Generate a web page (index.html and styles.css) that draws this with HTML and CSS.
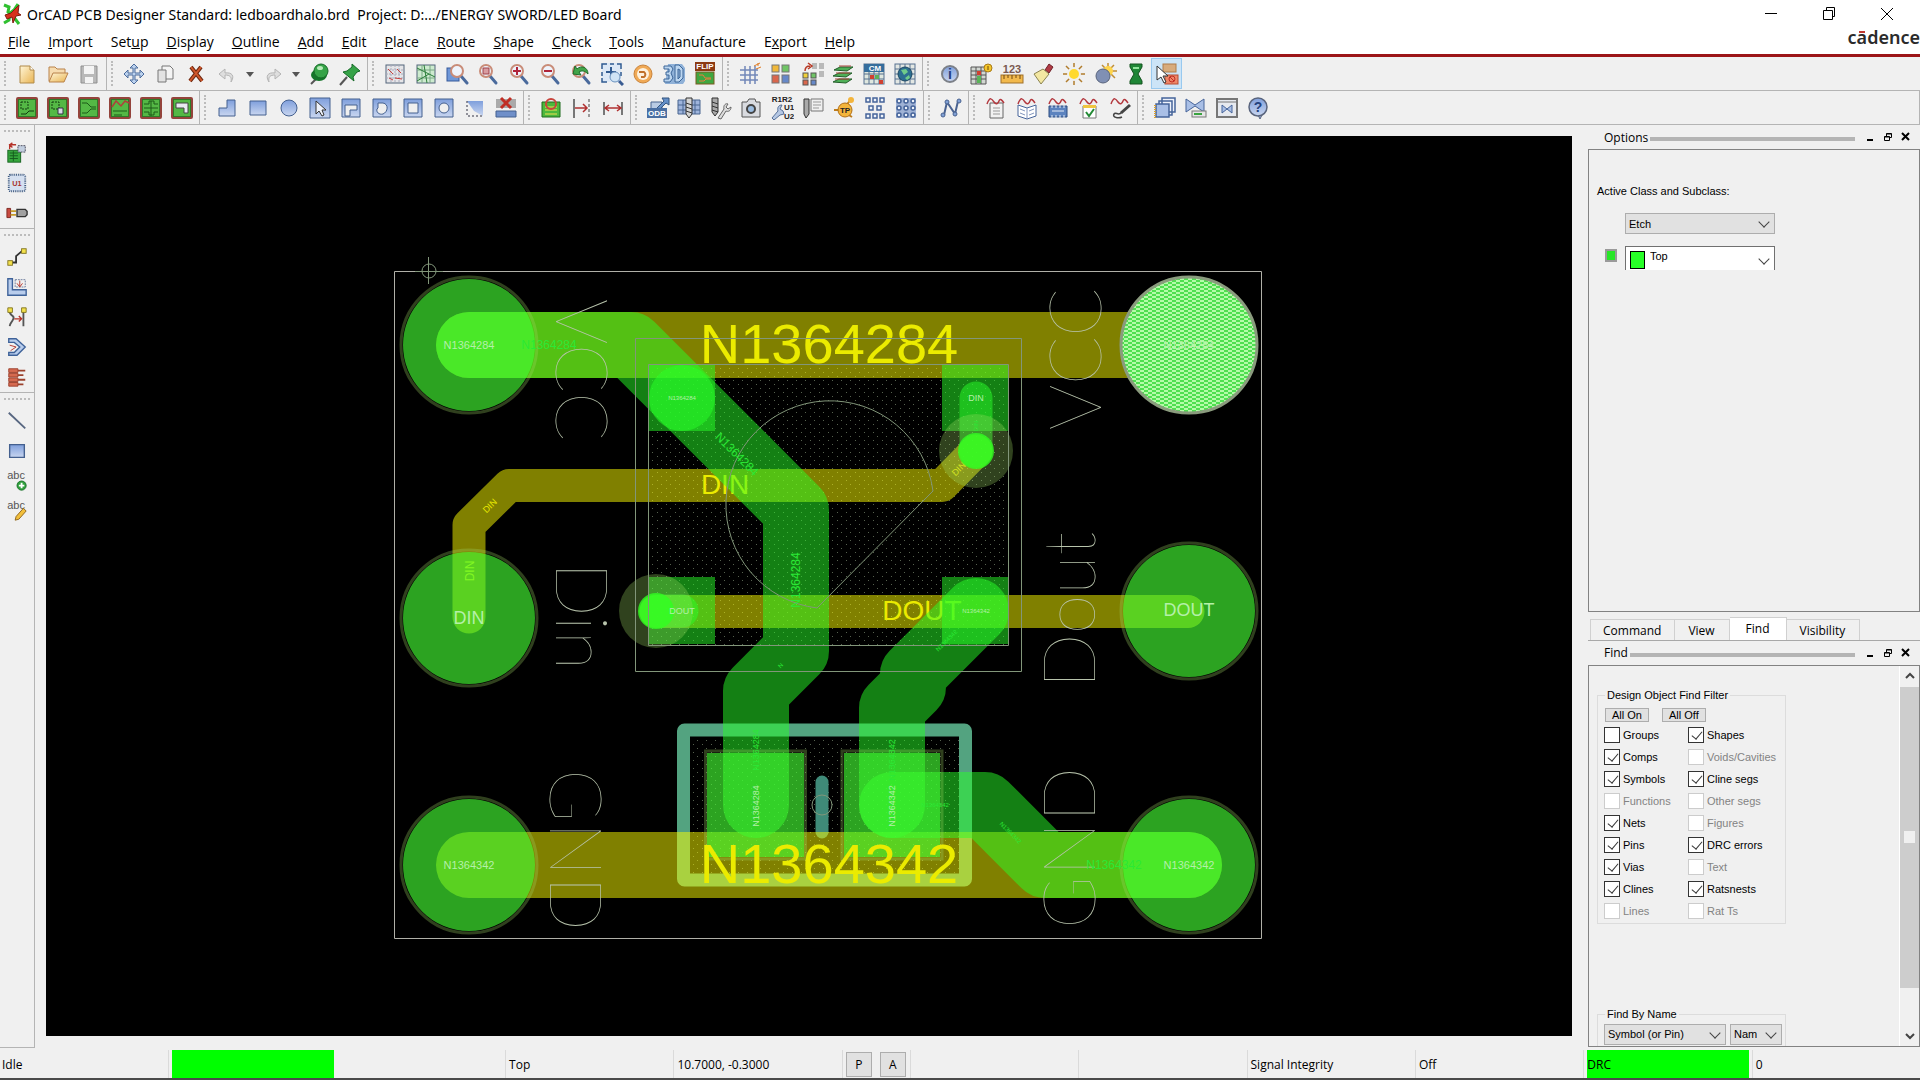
FILE: index.html
```
<!DOCTYPE html>
<html lang="en">
<head>
    <meta charset="UTF-8">
    <meta name="viewport" content="width=device-width, initial-scale=1.0">
    <title>OrCAD PCB Designer Standard: ledboardhalo.brd</title>
    <link rel="stylesheet" href="styles.css">
</head>
<body>
    <!-- shared gradients and symbols -->
    <svg class="defs" width="0" height="0" aria-hidden="true">
        <defs>
            <linearGradient id="blue" x1="0" y1="0" x2="0" y2="1"><stop offset="0" stop-color="#7f9fdc"/><stop offset="1" stop-color="#c9d6f0"/></linearGradient>
            <linearGradient id="gold" x1="0" y1="0" x2="1" y2="1"><stop offset="0" stop-color="#fff6d8"/><stop offset="1" stop-color="#e9b452"/></linearGradient>
            <symbol id="board" viewBox="0 0 24 24"><rect x="2" y="2" width="20" height="20" rx="1" fill="#54b845" stroke="#94443c" stroke-width="2"/><rect x="3.5" y="3.5" width="17" height="17" fill="none" stroke="#2f7a28"/></symbol>
            <symbol id="lens" viewBox="0 0 24 24"><path d="M14 14l6 7" stroke="#4a6a9c" stroke-width="3" stroke-linecap="round"/><circle cx="10" cy="9" r="6" fill="#eef3fb" stroke="#c98c78" stroke-width="2"/></symbol>
            <symbol id="wave" viewBox="0 0 24 24"><path d="M3 8c3-8 5-5 7-2s4 2 5-1 3-1 5 2" fill="none" stroke="#b3383e" stroke-width="1.5"/></symbol>
        </defs>
    </svg>

    <header>
        <div class="title-bar">
            <svg class="app-icon" viewBox="0 0 20 24"><path d="M2 3l5 2-1 5 5 4 6 8M2 21l5-3 1-7 4-3 4-6" fill="none" stroke="#30c030" stroke-width="3"/><path d="M3 13l6-2 8-8-1 8 3 2-5 1-3 7-1-6-5 2z" fill="#d8301c" stroke="#7c1c10"/></svg>
            <h1>OrCAD PCB Designer Standard: ledboardhalo.brd&nbsp; Project: D:.../ENERGY SWORD/LED Board</h1>
            <div class="window-buttons">
                <button aria-label="Minimize"><svg viewBox="0 0 14 14"><path d="M1 6.5h12"/></svg></button>
                <button aria-label="Restore"><svg viewBox="0 0 14 14"><path d="M1.5 3.5h9v9h-9zM4.5 3.5v-3h8v9h-2"/></svg></button>
                <button aria-label="Close"><svg viewBox="0 0 14 14"><path d="M1 1l12 12M13 1L1 13"/></svg></button>
            </div>
        </div>
        <div class="menu-row">
            <nav>
                <a href="#"><u>F</u>ile</a>
                <a href="#"><u>I</u>mport</a>
                <a href="#">Set<u>u</u>p</a>
                <a href="#"><u>D</u>isplay</a>
                <a href="#"><u>O</u>utline</a>
                <a href="#"><u>A</u>dd</a>
                <a href="#"><u>E</u>dit</a>
                <a href="#"><u>P</u>lace</a>
                <a href="#"><u>R</u>oute</a>
                <a href="#"><u>S</u>hape</a>
                <a href="#"><u>C</u>heck</a>
                <a href="#"><u>T</u>ools</a>
                <a href="#"><u>M</u>anufacture</a>
                <a href="#">E<u>x</u>port</a>
                <a href="#"><u>H</u>elp</a>
            </nav>
            <div class="brand">c<span>a</span>dence</div>
        </div>
    </header>

    <div class="toolbar">
        <div class="group">
            <button aria-label="New"><svg viewBox="0 0 24 24"><path d="M5 4h10l4 4v13H5z" fill="url(#gold)" stroke="#b08a4a"/><path d="M15 4v4h4" fill="#fff" stroke="#b08a4a"/></svg></button>
            <button aria-label="Open"><svg viewBox="0 0 24 24"><path d="M3 19V5h6l2 2h8v4" fill="#f6dcb0" stroke="#b9824b"/><path d="M3 20l4-9h15l-4 9z" fill="url(#gold)" stroke="#b9824b"/></svg></button>
            <button aria-label="Save" disabled><svg viewBox="0 0 24 24"><path d="M4 4h16v17H4z" fill="#b9b9b9" stroke="#8f8f8f"/><path d="M7 4h10v8H7zM8 15h8v6H8z" fill="#f4f4f4"/></svg></button>
        </div>
        <div class="group">
            <button aria-label="Move"><svg viewBox="0 0 24 24"><path d="M12 2l4 4h-3v5h5V8l4 4-4 4v-3h-5v5h3l-4 4-4-4h3v-5H6v3l-4-4 4-4v3h5V6H8z" fill="#bcd2ee" stroke="#4c6c9c"/></svg></button>
            <button aria-label="Copy"><svg viewBox="0 0 24 24"><path d="M9 4h8l3 3v10H9z" fill="#f4f4f4" stroke="#777"/><path d="M5 8h8v12H5z" fill="#e2e2e2" stroke="#777"/></svg></button>
            <button aria-label="Delete"><svg viewBox="0 0 24 24"><path d="M7 5l11 14M17 5L6 19" stroke="#6e2810" stroke-width="4"/><path d="M7 5l11 14M17 5L6 19" stroke="#d0562a" stroke-width="2"/></svg></button>
            <button aria-label="Undo" disabled><svg viewBox="0 0 24 24"><path d="M16 20c4-6 1-10-6-9V7l-6 5 6 5v-4c5 0 7 2 6 7z" fill="#dedede" stroke="#b4b4b4"/></svg></button>
            <button class="drop" aria-label="Undo list"><svg viewBox="0 0 12 24"><path d="M2 10h8l-4 5z" fill="#555"/></svg></button>
            <button aria-label="Redo" disabled><svg viewBox="0 0 24 24"><path d="M8 20c-4-6-1-10 6-9V7l6 5-6 5v-4c-5 0-7 2-6 7z" fill="#dedede" stroke="#b4b4b4"/></svg></button>
            <button class="drop" aria-label="Redo list"><svg viewBox="0 0 12 24"><path d="M2 10h8l-4 5z" fill="#555"/></svg></button>
            <button aria-label="Fix"><svg viewBox="0 0 24 24"><path d="M9 17l-5 5" stroke="#555" stroke-width="2"/><ellipse cx="12" cy="13" rx="8" ry="6" fill="#14752a"/><circle cx="14" cy="9" r="7" fill="#35a347" stroke="#176a28"/><ellipse cx="13" cy="6" rx="3" ry="2" fill="#b9eaba"/></svg></button>
            <button aria-label="Unfix"><svg viewBox="0 0 24 24"><path d="M9 15l-7 8" stroke="#555" stroke-width="2"/><path d="M14 2l8 7-3 1-4 5 1 4-11-9 4-1 5-4z" fill="#35a347" stroke="#176a28"/></svg></button>
        </div>
        <div class="group">
            <button aria-label="Rats off"><svg viewBox="0 0 24 24"><rect x="3" y="3" width="18" height="18" fill="#e5e5e8" stroke="#53657b"/><path d="M8 3v18M12 3v18M16 3v18M3 8h18M3 12h18M3 16h18" stroke="#aab" stroke-dasharray="2 1"/><path d="M5 7l5 5M12 16l7 1M14 7l4 4M6 16l4 2" stroke="#c8403c"/></svg></button>
            <button aria-label="Rats on"><svg viewBox="0 0 24 24"><rect x="3" y="3" width="18" height="18" fill="#cdebcf" stroke="#53657b"/><path d="M8 3v18M16 3v18M3 8h18M3 16h18" stroke="#7aa886"/><path d="M3 6l18 9M10 3l3 18M3 19l12-7" stroke="#2b7d39"/></svg></button>
            <button aria-label="Zoom by points"><svg viewBox="0 0 24 24"><rect x="2" y="6" width="12" height="13" fill="#6f97d8" stroke="#365a9b"/><use href="#lens" x="2"/></svg></button>
            <button aria-label="Zoom fit"><svg viewBox="0 0 24 24"><use href="#lens"/><path d="M7 6h6v6H7z" fill="#d89ca0" stroke="#a04048"/></svg></button>
            <button aria-label="Zoom in"><svg viewBox="0 0 24 24"><use href="#lens"/><path d="M10 5v8M6 9h8" stroke="#b0243a" stroke-width="2"/></svg></button>
            <button aria-label="Zoom out"><svg viewBox="0 0 24 24"><use href="#lens"/><path d="M6 9h8" stroke="#b0243a" stroke-width="2"/></svg></button>
            <button aria-label="Zoom previous"><svg viewBox="0 0 24 24"><use href="#lens"/><path d="M19 12c0-7-7-9-11-5L6 4 4 12l8 1-2-3c3-2 6-1 9 2z" fill="#42a54a" stroke="#1f6d2a"/></svg></button>
            <button aria-label="Zoom selection"><svg viewBox="0 0 24 24"><rect x="2" y="1" width="19" height="19" fill="#dce8f6"/><path d="M2 7V2h5M10 2h4M17 2h4v5M2 10v4M21 10v4M2 16v4h5" fill="none" stroke="#315b91" stroke-width="1.5"/><path d="M11 5v10M6 10h10" stroke="#315b91" stroke-width="2"/><circle cx="15" cy="15" r="5" fill="#cfe3f5" stroke="#6a91bd"/><path d="M19 19l4 4" stroke="#3a5c92" stroke-width="3"/></svg></button>
            <button aria-label="Redraw"><svg viewBox="0 0 24 24"><circle cx="12" cy="12" r="9" fill="#f0a955" stroke="#c9843c"/><circle cx="12" cy="12" r="6" fill="#fdf1de"/><path d="M8 10h5a3 3 0 010 5h-3" fill="none" stroke="#c0702a" stroke-width="2"/></svg></button>
            <button aria-label="3D view"><svg viewBox="0 0 24 24"><path d="M3 22h18l2-3V6l-3-4H6z" fill="#8fb1d8"/><path d="M2 4h7l2 3-2 4 2 5-3 4H2v-3h5v-4H4v-3h3V7H2zM13 3h4l4 4v9l-4 4h-4zM16 7v10l2-2V8z" fill="#bcd6f0" stroke="#3c6698"/></svg></button>
            <button aria-label="Flip board"><svg viewBox="0 0 24 24"><rect x="2" y="0" width="20" height="9" fill="#8c3a12"/><text x="12" y="7" class="icon-text light">FLIP</text><rect x="3" y="10" width="18" height="12" fill="#3fa640" stroke="#7c5a20"/><path d="M6 13h4l2 3h6M6 19h5l2-2h5" fill="none" stroke="#ef7a3c"/></svg></button>
        </div>
        <div class="group">
            <button aria-label="Grid"><svg viewBox="0 0 24 24"><path d="M7 4v18M12 4v18M17 4v18M2 8h18M2 13h18M2 18h18" stroke="#7187b8" stroke-width="1.5"/><path d="M16 4l6-3M18 7l5-2M20 1v3" stroke="#e07a20"/></svg></button>
            <button aria-label="Color"><svg viewBox="0 0 24 24"><rect x="3" y="3" width="7" height="7" fill="#f0b83a" stroke="#777"/><rect x="13" y="3" width="7" height="7" fill="#6fc465" stroke="#777"/><rect x="3" y="13" width="7" height="8" fill="#d9664c" stroke="#777"/><rect x="13" y="13" width="7" height="8" fill="#6688c8" stroke="#777"/></svg></button>
            <button aria-label="Color swap"><svg viewBox="0 0 24 24"><path d="M12 1h5v6h-5zM19 1h5v6h-5zM19 9h5v6h-5z" fill="#b9b9b9"/><rect x="3" y="11" width="5" height="5" fill="#f0d03a" stroke="#555"/><rect x="11" y="11" width="5" height="5" fill="#6fc465" stroke="#555"/><rect x="3" y="18" width="5" height="5" fill="#d9664c" stroke="#555"/><rect x="11" y="18" width="5" height="5" fill="#6688c8" stroke="#555"/><path d="M5 9c0-4 2-5 5-5M8 1l4 3-4 3" fill="none" stroke="#b83a26" stroke-width="1.5"/></svg></button>
            <button aria-label="Layers"><svg viewBox="0 0 24 24"><path d="M2 20l6-3h13l-6 4zM2 14l6-3h13l-6 4zM3 8l6-3h13l-6 4z" fill="#4faf57" stroke="#225e2a"/><path d="M4 17h14M5 11h14M8 4h12" stroke="#a8443a"/></svg></button>
            <button aria-label="Constraint manager"><svg viewBox="0 0 24 24"><rect x="2" y="2" width="20" height="20" fill="#dfe7df" stroke="#56708f"/><path d="M2 12h20M2 17h20M7 9v13M12 9v13M17 9v13" stroke="#56708f"/><path d="M8 13h4v4H8zM17 18h4v4h-4z" fill="#d04030"/><path d="M13 13h4v4h-4z" fill="#5cb05a"/><rect x="2" y="2" width="20" height="8" fill="#356d9c"/><text x="13" y="9" class="icon-text light">CM</text></svg></button>
            <button aria-label="Web constraints"><svg viewBox="0 0 24 24"><rect x="2" y="2" width="20" height="20" fill="#e3e7e3" stroke="#56708f"/><path d="M2 7h20M2 12h20M2 17h20M7 2v20M12 2v20M17 2v20" stroke="#56708f"/><circle cx="12" cy="12" r="7" fill="#2d6f90" stroke="#1c4662"/><path d="M8 8l5-1 2 3-4 3zM12 16l4-3 1 3-3 2z" fill="#70cc8a"/></svg></button>
        </div>
        <div class="group last">
            <button aria-label="Info"><svg viewBox="0 0 24 24"><circle cx="12" cy="12" r="8" fill="url(#blue)" stroke="#7c8088" stroke-width="2"/><text x="12" y="17" class="icon-text info">i</text></svg></button>
            <button aria-label="Cross section"><svg viewBox="0 0 24 24"><path d="M2 5h15v17H2z" fill="#d2d7d2" stroke="#555"/><path d="M2 9h15M2 13h15M2 17h15M7 5v17M12 5v17" stroke="#555"/><path d="M8 9h4v4H8z" fill="#d04030"/><path d="M8 14h4v7H8z" fill="#59b457"/><circle cx="19" cy="6" r="4" fill="#f4c62b" stroke="#a87a18"/><path d="M19 4v4" stroke="#704c08"/></svg></button>
            <button aria-label="Measure"><svg viewBox="0 0 24 24"><text x="12" y="11" class="icon-text num">123</text><rect x="1" y="13" width="22" height="8" fill="#f2b94c" stroke="#a0702a"/><path d="M4 13v4M8 13v3M12 13v4M16 13v3M20 13v4" stroke="#70480f"/></svg></button>
            <button aria-label="Highlight"><svg viewBox="0 0 24 24"><path d="M14 8l4-6 4 3-4 6z" fill="#b03a44" stroke="#702028"/><path d="M12 7l6 5-8 10-7-10z" fill="#f3e7a2" stroke="#8b8350"/></svg></button>
            <button aria-label="Dehighlight"><svg viewBox="0 0 24 24"><path d="M12 1v22M1 12h22M4 4l16 16M20 4L4 20" stroke="#b07c2c" stroke-width="1.5"/><circle cx="12" cy="12" r="6" fill="#ffd92f" stroke="#efefef" stroke-width="2"/></svg></button>
            <button aria-label="Shadow mode"><svg viewBox="0 0 24 24"><path d="M15 1v18M7 9h17M9 3l13 13M21 3l-8 8" stroke="#c08d34" stroke-width="1.5"/><circle cx="15" cy="9" r="5" fill="#ffd54a"/><circle cx="10" cy="14" r="7" fill="#8090b4" stroke="#59647d"/></svg></button>
            <button aria-label="Waive DRC"><svg viewBox="0 0 24 24"><path d="M6 2h12v3l-4 7 4 7v3H6v-3l4-7-4-7z" fill="#1f8636" stroke="#14521f"/><path d="M9 6h6" stroke="#8fe49a" stroke-width="2"/></svg></button>
            <button class="selected" aria-label="Select no shape"><svg viewBox="0 0 24 24"><rect x="8" y="2" width="13" height="8" fill="#d8ab7c" stroke="#b07d4a"/><rect x="10" y="13" width="13" height="9" fill="#ee8668" stroke="#b84a30"/><circle cx="17" cy="17" r="3" fill="none" stroke="#c02e24"/><path d="M15 15l4 4" stroke="#c02e24"/><path d="M2 4v14l4-3 3 6 2-1-3-6h5z" fill="#fff" stroke="#333"/></svg></button>
        </div>
    </div>

    <div class="toolbar second">
        <div class="group">
            <button aria-label="General edit"><svg viewBox="0 0 24 24"><use href="#board"/><path d="M6 6h7v7H6z" fill="none" stroke="#123d10" stroke-dasharray="2 1"/><path d="M6 18h5l3-3h5" fill="none" stroke="#123d10"/></svg></button>
            <button aria-label="Placement edit"><svg viewBox="0 0 24 24"><use href="#board"/><path d="M6 6h7v7H6z" fill="none" stroke="#123d10" stroke-dasharray="2 1"/><path d="M12 12h5v6h-5z" fill="#d9d9e6" stroke="#334"/></svg></button>
            <button aria-label="Etch edit"><svg viewBox="0 0 24 24"><use href="#board"/><path d="M5 7h5l4 4h5M5 17h5l4-4h5" fill="none" stroke="#1c5a18"/></svg></button>
            <button aria-label="Signal integrity"><svg viewBox="0 0 24 24"><use href="#board"/><path d="M4 11l4-6 5 5 4-5 4 2" fill="none" stroke="#b0403a" stroke-width="1.5"/><path d="M5 15h14M6 19h8" stroke="#1c5a18"/></svg></button>
            <button aria-label="Shape edit"><svg viewBox="0 0 24 24"><use href="#board"/><path d="M5 8h5v-3h5v3h4M5 12h14M5 16h5v3h5v-3h4M12 5v15" fill="none" stroke="#1c5a18"/></svg></button>
            <button aria-label="Flow planning"><svg viewBox="0 0 24 24"><use href="#board"/><path d="M6 7h12v10h-4v-5H6z" fill="#e9e9f1" stroke="#444"/></svg></button>
        </div>
        <div class="group">
            <button aria-label="Polygon"><svg viewBox="0 0 24 24"><path d="M4 20v-8h8V4h8v16z" fill="url(#blue)" stroke="#44608f"/></svg></button>
            <button aria-label="Rectangle"><svg viewBox="0 0 24 24"><path d="M4 5h16v14H4z" fill="url(#blue)" stroke="#44608f"/></svg></button>
            <button aria-label="Circle"><svg viewBox="0 0 24 24"><circle cx="12" cy="12" r="8" fill="url(#blue)" stroke="#44608f"/></svg></button>
            <button aria-label="Select shape"><svg viewBox="0 0 24 24"><path d="M2 2h20v20H2z" fill="url(#blue)" stroke="#44608f"/><path d="M8 5v13l3-3 3 5 2-1-2-5h4z" fill="#eef2fb" stroke="#333"/></svg></button>
            <button aria-label="Polygon void"><svg viewBox="0 0 24 24"><path d="M3 3h18v18H3z" fill="url(#blue)" stroke="#44608f"/><path d="M6 20V9h12v5h-7v6z" fill="#efefef" stroke="#44608f"/></svg></button>
            <button aria-label="Edit void"><svg viewBox="0 0 24 24"><path d="M3 3h18v18H3z" fill="url(#blue)" stroke="#44608f"/><path d="M8 12V7h5c6 1 5 9 0 11-4 1-7-2-6-5z" fill="#efefef" stroke="#44608f"/></svg></button>
            <button aria-label="Rectangular void"><svg viewBox="0 0 24 24"><path d="M3 3h18v18H3z" fill="url(#blue)" stroke="#44608f"/><path d="M7 7h10v10H7z" fill="#efefef" stroke="#44608f"/></svg></button>
            <button aria-label="Circular void"><svg viewBox="0 0 24 24"><path d="M3 3h18v18H3z" fill="url(#blue)" stroke="#44608f"/><circle cx="12" cy="12" r="5" fill="#efefef" stroke="#44608f"/></svg></button>
            <button aria-label="Delete islands"><svg viewBox="0 0 24 24"><path d="M4 5h16v15l-9-5z" fill="url(#blue)"/><path d="M4 5v15h16" fill="none" stroke="#334" stroke-dasharray="2 2"/></svg></button>
            <button aria-label="Delete void"><svg viewBox="0 0 24 24"><path d="M2 15h20v6H2z" fill="#6f8fc9" stroke="#44608f"/><path d="M2 3h20v9H2z" fill="#aaa"/><path d="M7 2l10 10M17 2L7 12" stroke="#c02e24" stroke-width="3"/></svg></button>
        </div>
        <div class="group">
            <button aria-label="Place manual"><svg viewBox="0 0 24 24"><path d="M3 6h18v15H3z" fill="#4cb83c" stroke="#1e6a1c"/><path d="M6 11h12M6 14h12M6 18h12" stroke="#f0e050"/><circle cx="12" cy="8" r="5" fill="none" stroke="#c8443c" stroke-width="2"/></svg></button>
            <button aria-label="Align"><svg viewBox="0 0 24 24"><path d="M4 3v19" stroke="#777" stroke-width="2"/><path d="M19 3v19" stroke="#444" stroke-dasharray="3 2"/><path d="M5 12h12M13 8l4 4-4 4" fill="none" stroke="#b03030" stroke-width="1.5"/></svg></button>
            <button aria-label="Spacing"><svg viewBox="0 0 24 24"><path d="M3 6v13M21 6v13" stroke="#777" stroke-width="2"/><path d="M5 12h14M8 9l-4 3 4 3M16 9l4 3-4 3" fill="none" stroke="#b03030" stroke-width="1.5"/></svg></button>
        </div>
        <div class="group">
            <button aria-label="ODB export"><svg viewBox="0 0 24 24"><path d="M5 6h11v8H5z" fill="#b9cbe4" stroke="#49658f"/><path d="M11 12l7-7-2-3h7v7l-3-2-7 7z" fill="#648fc8" stroke="#33547f"/><rect x="1" y="12" width="20" height="10" fill="#4a6fa3"/><text x="11" y="20" class="icon-text light">ODB</text></svg></button>
            <button aria-label="NC drill"><svg viewBox="0 0 24 24"><path d="M1 4h22v14H1z" fill="#9eb4dc" stroke="#49658f"/><path d="M1 9h22M1 14h22M6 4v14M18 4v14" stroke="#49658f"/><path d="M9 2h6v16l-3 4-3-4z" fill="#d6d6d6" stroke="#333"/><path d="M9 7l6 2M9 11l6 2M9 15l6 2" stroke="#333"/></svg></button>
            <button aria-label="NC parameters"><svg viewBox="0 0 24 24"><path d="M4 2h6v14l-3 4-3-4z" fill="#a9a9a9" stroke="#333"/><path d="M4 6l6 2M4 10l6 2M4 14l6 2" stroke="#333"/><path d="M10 22l6-9c-1-4 2-6 4-5l-2 3 2 2 3-2c0 4-3 5-5 4l-5 8z" fill="#ddd" stroke="#666"/></svg></button>
            <button aria-label="Artwork"><svg viewBox="0 0 24 24"><path d="M3 6h5l2-3h6l1 3h4v15H3z" fill="#d9dbe0" stroke="#555"/><circle cx="12" cy="13" r="4" fill="#9cbde0" stroke="#444" stroke-width="2"/></svg></button>
            <button aria-label="Rename refdes"><svg viewBox="0 0 24 24"><text x="12" y="6" class="icon-text">R1R2</text><text x="19" y="14" class="icon-text">U1</text><text x="19" y="23" class="icon-text">U2</text><path d="M2 22l6-7c-1-4 1-6 4-6l-2 4 3 2 1 3-4 1-6 5z" fill="#b6c8e4" stroke="#556f98"/></svg></button>
            <button aria-label="Drill legend"><svg viewBox="0 0 24 24"><path d="M3 3h5v15l-3 4-2-4z" fill="#aaa" stroke="#333"/><path d="M10 3h12v12H10z" fill="#f0f0f0" stroke="#777"/><path d="M12 6h8M12 9h8M12 12h6" stroke="#999"/></svg></button>
            <button aria-label="Test point"><svg viewBox="0 0 24 24"><path d="M2 14h9l8-11M12 16l8 5" stroke="#bd7c1c" stroke-width="2"/><circle cx="19" cy="4" r="3" fill="#f3b43b"/><circle cx="13" cy="14" r="7" fill="#f3b43b" stroke="#b06f18"/><text x="13" y="17" class="icon-text">TP</text></svg></button>
            <button aria-label="Panel rows"><svg viewBox="0 0 24 24"><g fill="#eef3fb" stroke="#46649a" stroke-width="1.5"><rect x="3" y="2" width="4" height="4"/><rect x="10" y="2" width="4" height="4"/><rect x="17" y="2" width="4" height="4"/><rect x="6" y="10" width="4" height="4"/><rect x="14" y="10" width="4" height="4"/><rect x="3" y="18" width="4" height="4"/><rect x="10" y="18" width="4" height="4"/><rect x="17" y="18" width="4" height="4"/></g></svg></button>
            <button aria-label="Via array"><svg viewBox="0 0 24 24"><path d="M2 2h20v20H2z" fill="#9fb2d5"/><g fill="#eef3fb" stroke="#46649a" stroke-width="1.5"><circle cx="5" cy="5" r="2"/><circle cx="12" cy="5" r="2"/><circle cx="19" cy="5" r="2"/><circle cx="5" cy="12" r="2"/><circle cx="12" cy="12" r="2"/><circle cx="19" cy="12" r="2"/><circle cx="5" cy="19" r="2"/><circle cx="12" cy="19" r="2"/><circle cx="19" cy="19" r="2"/></g></svg></button>
        </div>
        <div class="group">
            <button aria-label="Topology"><svg viewBox="0 0 24 24"><path d="M5 19L8 6l8 12 3-13" fill="none" stroke="#4a6391" stroke-width="2"/><g fill="#7f9fd4" stroke="#4a6391"><circle cx="4" cy="19" r="2"/><circle cx="8" cy="6" r="2"/><circle cx="16" cy="18" r="2"/><circle cx="20" cy="5" r="2"/></g></svg></button>
        </div>
        <div class="group">
            <button aria-label="Signal report"><svg viewBox="0 0 24 24"><path d="M6 7h13v15H6z" fill="#f2f2f2" stroke="#666"/><path d="M9 12h7M9 15h7M9 18h7" stroke="#999"/><use href="#wave"/></svg></button>
            <button aria-label="Signal library"><svg viewBox="0 0 24 24"><path d="M3 9l9 3 9-3v11l-9 3-9-3z" fill="#fff" stroke="#46649a"/><path d="M12 12v11M5 13l5 2M14 15l5-2M5 17l5 2M14 19l5-2" stroke="#8195bd"/><use href="#wave"/></svg></button>
            <button aria-label="Signal model"><svg viewBox="0 0 24 24"><path d="M3 10h18v11H3z" fill="#5c83bf" stroke="#2d4d80"/><path d="M6 9v3M10 9v3M14 9v3M18 9v3M6 19v4M10 19v4M14 19v4M18 19v4M6 15h12" stroke="#e6edf8"/><use href="#wave"/></svg></button>
            <button aria-label="Signal audit"><svg viewBox="0 0 24 24"><path d="M6 10h13v12H6z" fill="#fff" stroke="#777"/><path d="M6 9h13v3H6z" fill="#efc53f"/><path d="M9 16l3 4 5-7" fill="none" stroke="#238a35" stroke-width="2"/><use href="#wave"/></svg></button>
            <button aria-label="Signal probe"><svg viewBox="0 0 24 24"><path d="M22 9l-9 8" stroke="#444" stroke-width="3"/><path d="M14 16c-4 5-6-1-8 2s4 5 8 3" fill="none" stroke="#444" stroke-width="1.5"/><use href="#wave"/></svg></button>
        </div>
        <div class="group last">
            <button aria-label="Windows"><svg viewBox="0 0 24 24"><path d="M9 2h13v14H9zM6 5h13v14H6z" fill="#eef2fb" stroke="#46649a" stroke-width="1.5"/><path d="M3 8h13v13H3z" fill="#a9bfe6" stroke="#46649a" stroke-width="1.5"/><path d="M2 9v13" stroke="#d8a030" stroke-width="2" stroke-dasharray="1 1"/></svg></button>
            <button aria-label="Compare"><svg viewBox="0 0 24 24"><path d="M2 3l9 6 9-6v13l-9-6-9 6z" fill="#a9bfe6" stroke="#46649a"/><rect x="8" y="15" width="14" height="6" fill="#e5e5e5" stroke="#777"/><path d="M10 18h8" stroke="#39a33f" stroke-width="2"/></svg></button>
            <button aria-label="Viewer"><svg viewBox="0 0 24 24"><path d="M2 3h20v18H2z" fill="#e6e9ef" stroke="#777" stroke-width="2"/><path d="M2 6h20" stroke="#777"/><path d="M7 9l5 4 5-4v8l-5-4-5 4z" fill="#a9bfe6" stroke="#46649a"/></svg></button>
            <button aria-label="Help"><svg viewBox="0 0 24 24"><path d="M14 23l-2-4h4z" fill="#9cb1de" stroke="#59647d"/><circle cx="12" cy="11" r="9" fill="url(#blue)" stroke="#59647d" stroke-width="1.5"/><text x="12" y="16" class="icon-text info">?</text></svg></button>
        </div>
    </div>

    <main>
        <aside class="side-tools">
            <div class="side-group">
                <button aria-label="Place component"><svg viewBox="0 0 24 24"><rect x="2" y="9" width="14" height="13" fill="#35a53c" stroke="#14601e"/><path d="M4 12h9M4 15h9M4 18h9M8 10v11" stroke="#145a1d"/><path d="M13 4h8v7h-8z" fill="#c3cfe0" stroke="#445" stroke-dasharray="2 1"/><path d="M4 8V3h7M7 1L4 3l3 3" fill="none" stroke="#b53329" stroke-width="1.5"/></svg></button>
                <button aria-label="Update part"><svg viewBox="0 0 24 24"><rect x="3" y="3" width="18" height="18" rx="2" fill="#d5e0f0" stroke="#3c587f" stroke-width="2" stroke-dasharray="1 1"/><text x="12" y="15" class="icon-text red">U1</text></svg></button>
                <button aria-label="Connector"><svg viewBox="0 0 24 24"><path d="M1 7h4v10H1z" fill="#c84a40" stroke="#7b251f"/><path d="M5 10h6M5 14h6" stroke="#c79b28" stroke-width="2"/><path d="M12 8h9l2 2v4l-2 2h-9z" fill="#a0a0a0" stroke="#333" stroke-width="1.5"/></svg></button>
            </div>
            <div class="side-group">
                <button aria-label="Add connect"><svg viewBox="0 0 24 24"><path d="M5 18h6v-7l7-6" fill="none" stroke="#333" stroke-width="2"/><rect x="2" y="16" width="5" height="5" fill="#f3e14c" stroke="#807320"/><rect x="17" y="3" width="5" height="5" fill="#f3e14c" stroke="#807320"/></svg></button>
                <button aria-label="Slide"><svg viewBox="0 0 24 24"><path d="M2 3h5v12h15v6H2z" fill="#b9cdec" stroke="#3e6299" stroke-width="1.5"/><path d="M10 4h11v8H10z" fill="none" stroke="#68789a" stroke-dasharray="2 1"/><path d="M15 5v6M12 8l3 4 3-4" fill="none" stroke="#b53329"/></svg></button>
                <button aria-label="Delay tune"><svg viewBox="0 0 24 24"><path d="M4 5c0 8 6 4 4 9s-3 3-4 8M19 5v17" fill="none" stroke="#555" stroke-width="2"/><path d="M9 14h8M14 11l3 3-3 3" fill="none" stroke="#b53329" stroke-width="1.5"/><path d="M2 2h5v5H2zM17 2h5v5h-5z" fill="#f3e14c" stroke="#807320"/></svg></button>
                <button aria-label="Custom smooth"><svg viewBox="0 0 24 24"><path d="M3 3h8l10 9-9 9H3v-3h6l6-6-6-5H3z" fill="#b9cdec" stroke="#3e6299" stroke-width="1.5"/><path d="M4 10l7 2-6 4" fill="none" stroke="#b53329"/></svg></button>
                <button aria-label="Fanout"><svg viewBox="0 0 24 24"><path d="M3 3h10v4H3zM3 8h10v4H3zM3 13h10v4H3zM3 18h10v4H3z" fill="#d66a50" stroke="#9b412d"/><path d="M13 5h8M13 10h6M13 15h8M13 20h6" stroke="#9b412d" stroke-width="2"/></svg></button>
            </div>
            <div class="side-group grow">
                <button aria-label="Add line"><svg viewBox="0 0 24 24"><path d="M3 3l18 17" stroke="#576680" stroke-width="2"/></svg></button>
                <button aria-label="Add rectangle"><svg viewBox="0 0 24 24"><path d="M4 5h16v14H4z" fill="url(#blue)" stroke="#44608f" stroke-width="1.5"/></svg></button>
                <button aria-label="Add text"><svg viewBox="0 0 24 24"><text x="11" y="10" class="icon-text abc">abc</text><circle cx="17" cy="17" r="5" fill="#2ea13b" stroke="#19702a"/><path d="M17 14v6M14 17h6" stroke="#fff" stroke-width="2"/></svg></button>
                <button aria-label="Edit text"><svg viewBox="0 0 24 24"><text x="11" y="10" class="icon-text abc">abc</text><path d="M10 22l1-4 8-9 3 3-8 9z" fill="#f2bf3b" stroke="#8b621c"/></svg></button>
            </div>
        </aside>

        <svg class="canvas" viewBox="46 136 1526 900" role="img" aria-label="LED board layout">
            <defs>
                <pattern id="dots" width="9" height="8" patternUnits="userSpaceOnUse"><path d="M0 0h1v1H0zM4 4h1v1H4z" fill="#56614f"/></pattern>
                <pattern id="hatch" width="8" height="4" patternUnits="userSpaceOnUse"><path d="M0 0h8v4H0z" fill="#4fdf50"/><path d="M0 0h4v2H0zM4 2h4v2H4z" fill="#b4fca8"/></pattern>
            </defs>

            <!-- silkscreen -->
            <g class="dots">
                <rect x="648" y="364" width="361" height="281"/>
                <rect x="690" y="737" width="270" height="136"/>
            </g>
            <rect class="silk" x="683.5" y="730" width="282" height="150" rx="1"/>
            <path class="silk-bar" d="M822 782v50"/>

            <!-- bottom etch -->
            <g class="bottom-etch">
                <path class="wide" d="M469 345H1189M469 865H1189"/>
                <path class="narrow" d="M469 617V525L509 485.5H942L976 451M656 611.5H1188"/>
            </g>

            <!-- net names on the bottom etch, seen through the layers above -->
            <g class="net yellow">
                <text class="s56" x="829" y="363">N1364284</text>
                <text class="s28" x="725" y="494">DIN</text>
                <text class="s28" x="922" y="620">DOUT</text>
                <text class="s12" transform="translate(474 571) rotate(-90)">DIN</text>
                <text class="s9" transform="translate(492 508) rotate(-45)">DIN</text>
                <text class="s9" transform="translate(961 471) rotate(-45)">DIN</text>
            </g>

            <!-- top etch -->
            <g class="top-etch"><path class="wide" d="M469 345H631L796 510V651L756 691V805"/></g>
            <g class="top-etch"><path class="wide" d="M976 611L913 674V687L892 708V805"/></g>
            <g class="top-etch"><path class="wide" d="M892 805H985L1045 865H1189"/></g>
            <g class="top-etch"><path class="narrow" d="M976 398V451M656 611H682"/></g>
            <g class="top-etch"><circle cx="682" cy="398" r="33"/></g>

            <!-- pads and vias -->
            <g class="top-etch">
                <path d="M649 365h66v66h-66zM942 365h67v66h-67zM942 577h67v67h-67zM649 577h66v67h-66z"/>
            </g>
            <g class="ring">
                <circle cx="469" cy="345" r="68"/>
                <circle cx="469" cy="618" r="68"/>
                <circle cx="469" cy="865" r="68"/>
                <circle cx="1189" cy="611" r="68"/>
                <circle cx="1189" cy="865" r="68"/>
                <path d="M705.5 751h100v108h-100zM842 751h100v108H842z"/>
            </g>
            <g class="pad">
                <circle cx="469" cy="345" r="66"/>
                <circle cx="469" cy="618" r="66"/>
                <circle cx="469" cy="865" r="66"/>
                <circle cx="1189" cy="611" r="66"/>
                <circle cx="1189" cy="865" r="66"/>
                <path d="M707 753h97v104h-97zM844 753h96v104h-96z"/>
            </g>
            <g class="via">
                <circle cx="976" cy="451" r="37"/>
                <circle cx="656" cy="611" r="37"/>
            </g>
            <g class="hole">
                <circle cx="976" cy="451" r="18"/>
                <circle cx="656" cy="611" r="18"/>
            </g>
            <circle cx="1189" cy="345" r="68" fill="url(#hatch)" stroke="#8a9b7d" stroke-width="3"/>

            <!-- outlines -->
            <g class="outline">
                <path class="board-edge" d="M394.5 271.5H1261.5V938.5H394.5z"/>
                <path d="M635.5 338.5H1021.5V671.5H635.5zM648.5 364.5H1008.5V645.5H648.5z"/>
                <path d="M933 491A104 104 0 1 0 817 608z"/>
                <circle cx="429" cy="271" r="7"/>
                <path d="M428.5 257v27M415 271.5h28"/>
                <circle cx="822" cy="805" r="10"/>
            </g>

            <!-- pad legends -->
            <g class="legend">
                <text transform="translate(556 370) rotate(90)">VCC</text>
                <text transform="translate(556 616) rotate(90)">Din</text>
                <text transform="translate(550 850) rotate(90)">GND</text>
                <text transform="translate(1101 359) rotate(-90)">VCC</text>
                <text transform="translate(1095 610) rotate(-90)">Dout</text>
                <text transform="translate(1095 848) rotate(-90)">GND</text>
            </g>

            <!-- net names -->
            <g class="net yellow">
                <text class="s56" x="829" y="883">N1364342</text>
            </g>
            <g class="net green">
                <text class="s12" x="549" y="349">N1364284</text>
                <text class="s12" x="1114" y="869">N1364342</text>
                <text class="s12" transform="translate(734 457) rotate(45)">N1364284</text>
                <text class="s12" transform="translate(800 580) rotate(-90)">N1364284</text>
                <text class="s9" transform="translate(759 750) rotate(-90)">N1364284</text>
                <text class="s9" transform="translate(895 760) rotate(-90)">N1364342</text>
                <text class="s6" x="935" y="807">N1364342</text>
                <text class="s6" transform="translate(1009 834) rotate(45)">N1364342</text>
                <text class="s6" transform="translate(948 642) rotate(-45)">N1364342</text>
                <text class="s6" transform="translate(978 426) rotate(-90)">DIN</text>
                <text class="s6" transform="translate(782 667) rotate(-45)">N</text>
            </g>
            <g class="net pale">
                <text class="s11" x="469" y="349">N1364284</text>
                <text class="s11" x="469" y="869">N1364342</text>
                <text class="s11" x="1189" y="349">N1364284</text>
                <text class="s11" x="1189" y="869">N1364342</text>
                <text class="s18" x="469" y="624">DIN</text>
                <text class="s18" x="1189" y="616">DOUT</text>
                <text class="s9" x="976" y="401">DIN</text>
                <text class="s9" x="682" y="614">DOUT</text>
                <text class="s6" x="682" y="400">N1364284</text>
                <text class="s6" x="976" y="613">N1364342</text>
                <text class="s9" transform="translate(759 806) rotate(-90)">N1364284</text>
                <text class="s9" transform="translate(895 806) rotate(-90)">N1364342</text>
            </g>
        </svg>

        <aside class="panels">
            <div class="panel-head">
                <h2>Options</h2><i></i>
                <button aria-label="Minimize Options"><svg viewBox="0 0 12 12"><path d="M3 9h6"/></svg></button>
                <button aria-label="Float Options"><svg viewBox="0 0 12 12"><path class="thin" d="M2.5 5.5h5v4h-5zM4.5 5V2.5h5v4H8M4.5 3h5M2.5 6h5"/></svg></button>
                <button aria-label="Close Options"><svg viewBox="0 0 12 12"><path d="M2 2l7 7M9 2l-7 7"/></svg></button>
            </div>
            <section class="panel options">
                <p>Active Class and Subclass:</p>
                <div class="combo class-combo">
                    <select aria-label="Active class"><option>Etch</option></select>
                </div>
                <div class="subclass">
                    <button class="swatch" aria-label="Top visible"></button>
                    <div class="combo subclass-combo">
                        <select aria-label="Active subclass"><option>Top</option></select>
                        <span class="color"></span>
                    </div>
                </div>
            </section>

            <div class="tabs">
                <button>Command</button>
                <button>View</button>
                <button class="active">Find</button>
                <button>Visibility</button>
            </div>
            <div class="panel-head">
                <h2>Find</h2><i></i>
                <button aria-label="Minimize Find"><svg viewBox="0 0 12 12"><path d="M3 9h6"/></svg></button>
                <button aria-label="Float Find"><svg viewBox="0 0 12 12"><path class="thin" d="M2.5 5.5h5v4h-5zM4.5 5V2.5h5v4H8M4.5 3h5M2.5 6h5"/></svg></button>
                <button aria-label="Close Find"><svg viewBox="0 0 12 12"><path d="M2 2l7 7M9 2l-7 7"/></svg></button>
            </div>
            <section class="panel find">
                <div class="find-body">
                    <fieldset>
                        <legend>Design Object Find Filter</legend>
                        <div class="all-buttons">
                            <button>All On</button>
                            <button>All Off</button>
                        </div>
                        <div class="checks">
                            <label><input type="checkbox">Groups</label>
                            <label><input type="checkbox" checked>Shapes</label>
                            <label><input type="checkbox" checked>Comps</label>
                            <label class="off"><input type="checkbox" disabled>Voids/Cavities</label>
                            <label><input type="checkbox" checked>Symbols</label>
                            <label><input type="checkbox" checked>Cline segs</label>
                            <label class="off"><input type="checkbox" disabled>Functions</label>
                            <label class="off"><input type="checkbox" disabled>Other segs</label>
                            <label><input type="checkbox" checked>Nets</label>
                            <label class="off"><input type="checkbox" disabled>Figures</label>
                            <label><input type="checkbox" checked>Pins</label>
                            <label><input type="checkbox" checked>DRC errors</label>
                            <label><input type="checkbox" checked>Vias</label>
                            <label class="off"><input type="checkbox" disabled>Text</label>
                            <label><input type="checkbox" checked>Clines</label>
                            <label><input type="checkbox" checked>Ratsnests</label>
                            <label class="off"><input type="checkbox" disabled>Lines</label>
                            <label class="off"><input type="checkbox" disabled>Rat Ts</label>
                        </div>
                    </fieldset>
                    <fieldset class="by-name">
                        <legend>Find By Name</legend>
                        <div class="name-row">
                            <div class="combo type-combo"><select aria-label="Object type"><option>Symbol (or Pin)</option></select></div>
                            <div class="combo name-combo"><select aria-label="Find by"><option>Name</option></select></div>
                        </div>
                    </fieldset>
                </div>
                <div class="scrollbar">
                    <button aria-label="Scroll up"><svg viewBox="0 0 12 12"><path d="M2 8l4-4 4 4"/></svg></button>
                    <div class="track"><div class="thumb"></div></div>
                    <button aria-label="Scroll down"><svg viewBox="0 0 12 12"><path d="M2 4l4 4 4-4"/></svg></button>
                </div>
            </section>
        </aside>
    </main>

    <footer>
        <div>Idle</div>
        <div class="busy"><span></span></div>
        <div>Top</div>
        <div>10.7000, -0.3000</div>
        <div class="pick"><button>P</button><button>A</button></div>
        <div></div>
        <div></div>
        <div>Signal Integrity</div>
        <div>Off</div>
        <div class="drc"><span>DRC</span></div>
        <div>0</div>
    </footer>
</body>
</html>
```
FILE: styles.css
```
* {
    box-sizing: border-box;
}
body {
    margin: 0;
    height: 100vh;
    display: flex;
    flex-direction: column;
    overflow: hidden;
    background-color: #f0f0f0;
    color: #000;
    font-family: "Open Sans", "Noto Sans", sans-serif;
    font-size: 12px;
}
button {
    margin: 0;
    padding: 0;
    border: none;
    background: none;
    color: inherit;
    font-family: inherit;
    font-size: inherit;
}
svg {
    display: block;
    fill: none;
}
.defs {
    position: absolute;
}

/* title and menu */
header {
    flex: none;
    background-color: #fff;
    border-bottom: 3px solid #9c1518;
}
.title-bar {
    display: flex;
    align-items: center;
    height: 28px;
    padding-left: 2px;
}
.app-icon {
    width: 20px;
    height: 24px;
    margin-right: 5px;
}
h1 {
    flex: 1;
    margin: 0;
    font-family: "Noto Sans", "Open Sans", sans-serif;
    font-size: 14px;
    font-weight: normal;
}
.window-buttons {
    display: flex;
    padding-right: 4px;
}
.window-buttons button {
    width: 58px;
    height: 28px;
}
.window-buttons svg {
    width: 14px;
    height: 14px;
    margin: 0 auto;
    stroke: #000;
}
.menu-row {
    display: flex;
    justify-content: space-between;
    height: 26px;
}
nav {
    display: flex;
    align-items: center;
    gap: 18px;
    padding-left: 8px;
}
nav a {
    color: #000;
    font-size: 14px;
    text-decoration: none;
}
.brand {
    font-family: "Noto Sans", sans-serif;
    font-size: 18px;
    font-weight: 600;
    line-height: 18px;
    color: #2b2b2b;
}
.brand span {
    position: relative;
}
.brand span::before {
    content: "";
    position: absolute;
    left: 2px;
    top: 6px;
    width: 6px;
    height: 2px;
    background-color: #c23a32;
}

/* toolbars */
.toolbar {
    flex: none;
    display: flex;
    height: 34px;
    border-bottom: 1px solid #b4b4b4;
}
.toolbar.second {
    border-right: 1px solid #b4b4b4;
}
.group {
    position: relative;
    display: flex;
    align-items: stretch;
    padding: 1px 2px 1px 11px;
    border-right: 1px solid #b4b4b4;
}
.group.last {
    border-right: none;
}
.group::before {
    content: "";
    position: absolute;
    left: 4px;
    top: 4px;
    bottom: 4px;
    border-left: 2px dotted #bcbcbc;
}
.group button {
    width: 31px;
}
.group button.drop {
    width: 15px;
}
.group svg,
.side-group svg {
    width: 24px;
    height: 24px;
    margin: 0 auto;
}
.group .drop svg {
    width: 12px;
}
.group button.selected {
    background-color: #cce4f7;
    border: 1px solid #99c9ef;
}
.icon-text {
    font-family: "Liberation Sans", sans-serif;
    font-size: 8px;
    font-weight: bold;
    text-anchor: middle;
    fill: #222;
}
.icon-text.light {
    fill: #fff;
}
.icon-text.red {
    fill: #a8322c;
}
.icon-text.info {
    font-size: 14px;
    fill: #24407c;
}
.icon-text.num {
    font-size: 11px;
    fill: #7a5a50;
}
.icon-text.abc {
    font-size: 12px;
    font-weight: normal;
    fill: #555;
}

/* work area */
main {
    flex: 1;
    display: flex;
    min-height: 0;
}
.side-tools {
    flex: none;
    display: flex;
    flex-direction: column;
    width: 35px;
    border-right: 1px solid #b4b4b4;
}
.side-group {
    position: relative;
    display: flex;
    flex-direction: column;
    padding-top: 13px;
    border-bottom: 1px solid #b4b4b4;
}
.side-group.grow {
    flex: 1;
}
.side-group::before {
    content: "";
    position: absolute;
    left: 4px;
    right: 4px;
    top: 5px;
    border-top: 2px dotted #bcbcbc;
}
.side-group button {
    height: 30px;
}
.side-group svg {
    width: 22px;
    height: 22px;
}
.canvas {
    flex: 1;
    min-width: 0;
    margin: 11px 16px 12px 11px;
    background-color: #000;
}

/* board layers */
.dots {
    fill: url(#dots);
}
.silk {
    stroke: #53a380;
    stroke-width: 13px;
    stroke-linejoin: round;
}
.silk-bar {
    stroke: #3f8a78;
    stroke-width: 13px;
    stroke-linecap: round;
}
.wide,
.narrow {
    fill: none;
    stroke-linecap: round;
    stroke-linejoin: round;
}
.wide {
    stroke-width: 66px;
}
.narrow {
    stroke-width: 33px;
}
.bottom-etch {
    opacity: 0.5;
    stroke: #ff0;
}
.top-etch {
    opacity: 0.5;
}
.top-etch path,
.top-etch circle {
    fill: #28ff28;
}
.top-etch .wide,
.top-etch .narrow {
    fill: none;
    stroke: #28ff28;
}
.ring {
    opacity: 0.3;
    stroke: #a0d464;
    stroke-width: 3px;
}
.pad {
    opacity: 0.64;
    fill: #45ff34;
}
.via {
    opacity: 0.3;
    fill: #a0dc64;
}
.hole {
    opacity: 0.8;
    fill: #30ff20;
}
.outline {
    stroke: #82967a;
}
.board-edge {
    stroke: #b0b0a8;
}
.legend {
    font-family: Lato, Roboto, sans-serif;
    font-size: 72px;
    font-weight: 100;
    text-anchor: middle;
    fill: #b8c4ac;
}
.net {
    font-family: "Liberation Sans", sans-serif;
    text-anchor: middle;
}
.yellow {
    fill: #ebeb00;
}
.green {
    fill: #2be836;
}
.pale {
    fill: #b4f0a8;
}
.s56 { font-size: 56px; }
.s28 { font-size: 28px; }
.s18 { font-size: 18px; }
.s12 { font-size: 12px; }
.s11 { font-size: 11px; }
.s9 { font-size: 9px; }
.s6 { font-size: 6px; }

/* right panels */
.panels {
    flex: none;
    display: flex;
    flex-direction: column;
    width: 332px;
    padding-bottom: 1px;
}
.panel-head {
    flex: none;
    display: flex;
    align-items: center;
    height: 24px;
    padding: 0 5px 0 16px;
}
.panel-head h2 {
    margin: 0;
    font-size: 12px;
    font-weight: normal;
}
.panel-head i {
    flex: 1;
    height: 4px;
    margin: 4px 6px 0 2px;
    background-color: #b4b4b4;
}
.panel-head button {
    width: 18px;
}
.panel-head svg {
    width: 12px;
    height: 12px;
    margin: 0 auto;
    stroke: #000;
    stroke-width: 2px;
}
.panel-head .thin {
    stroke-width: 1px;
}
.panel {
    min-height: 0;
    overflow: hidden;
    border: 1px solid #828282;
    font-family: "Liberation Sans", sans-serif;
    font-size: 11px;
}
.options {
    flex: 463;
    padding-left: 8px;
}
.options p {
    margin: 34px 0 15px;
    line-height: 14px;
}
.combo {
    position: relative;
}
.combo select {
    appearance: none;
    display: block;
    width: 100%;
    height: 21px;
    padding: 0 24px 0 3px;
    border: 1px solid #adadad;
    border-radius: 0;
    background-color: #e1e1e1;
    color: #000;
    font-family: inherit;
    font-size: inherit;
}
.combo::after {
    content: "";
    position: absolute;
    right: 7px;
    top: 5px;
    width: 7px;
    height: 7px;
    border: solid #444;
    border-width: 0 1px 1px 0;
    transform: rotate(45deg);
}
.class-combo {
    width: 150px;
    margin-left: 28px;
}
.subclass {
    display: flex;
    align-items: flex-start;
    gap: 8px;
    margin-top: 12px;
    padding-left: 8px;
}
.swatch {
    width: 12px;
    height: 13px;
    margin-top: 3px;
    border: 2px solid #9a9a9a;
    background-color: #28e628;
}
.subclass-combo {
    width: 150px;
}
.subclass-combo select {
    height: 24px;
    padding: 0 24px 5px 24px;
    border-color: #707070;
    border-bottom: none;
    background-color: #fff;
}
.subclass-combo::after {
    top: 9px;
}
.color {
    position: absolute;
    left: 5px;
    top: 5px;
    width: 15px;
    height: 18px;
    border: 1px solid #000;
    background-color: #28ff28;
}
.tabs {
    flex: none;
    display: flex;
    align-items: flex-end;
    height: 29px;
    padding-left: 2px;
    border-bottom: 1px solid #a8a8a8;
}
.tabs button {
    height: 21px;
    padding: 1px 14px 0 13px;
    border: 1px solid #d0d0d0;
    border-left: none;
    border-bottom: none;
}
.tabs button:first-child {
    padding: 1px 13px 0 12px;
    border-left: 1px solid #d0d0d0;
}
.tabs .active {
    height: 23px;
    padding: 0 16px;
    background-color: #fff;
}
.find {
    flex: 382;
    display: flex;
}
.find-body {
    flex: 1;
    padding: 23px 0 0 8px;
}
fieldset {
    width: 189px;
    margin: 0;
    padding: 6px 0 0 6px;
    border: 1px solid #dcdcdc;
}
legend {
    margin-left: 1px;
    padding: 0 2px;
    line-height: 13px;
}
.all-buttons {
    display: flex;
    gap: 13px;
    padding-left: 1px;
    margin-bottom: 2px;
}
.all-buttons button {
    height: 14px;
    padding: 0 6px;
    border: 1px solid #adadad;
    background-color: #e1e1e1;
    line-height: 12px;
}
.checks {
    display: grid;
    grid-template-columns: 84px 1fr;
    grid-auto-rows: 22px;
    padding-bottom: 1px;
}
.checks label {
    display: flex;
    align-items: center;
    gap: 3px;
    white-space: nowrap;
}
.checks input {
    appearance: none;
    position: relative;
    width: 16px;
    height: 16px;
    margin: 0;
    border: 1px solid #333;
    background-color: #fff;
}
.checks input:checked::after {
    content: "";
    position: absolute;
    left: 5px;
    top: 1px;
    width: 5px;
    height: 9px;
    border: solid #333;
    border-width: 0 1px 1px 0;
    transform: rotate(40deg);
}
.checks .off {
    color: #838383;
}
.checks input:disabled {
    border-color: #ccc;
}
.by-name {
    margin-top: 84px;
    padding-top: 3px;
}
.name-row {
    display: flex;
    gap: 4px;
    padding-bottom: 6px;
}
.type-combo {
    width: 122px;
}
.name-combo {
    width: 52px;
}
.scrollbar {
    flex: none;
    display: flex;
    flex-direction: column;
    width: 20px;
    border-left: 1px solid #fff;
}
.scrollbar button {
    height: 21px;
}
.scrollbar svg {
    width: 12px;
    height: 12px;
    margin: 0 auto;
    stroke: #444;
    stroke-width: 2px;
}
.track {
    flex: 1;
}
.thumb {
    display: flex;
    align-items: center;
    justify-content: center;
    height: 89%;
    background-color: #cdcdcd;
}
.thumb::before {
    content: "";
    width: 11px;
    height: 12px;
    background-color: #f0f0f0;
}

/* status bar */
footer {
    flex: none;
    display: grid;
    grid-template-columns: 1fr 2fr 1fr 1fr 68px repeat(6, 1fr);
    height: 32px;
    padding-top: 2px;
    border-bottom: 2px solid #4a4a4a;
}
footer > div {
    display: flex;
    align-items: center;
    padding-left: 3px;
    border-left: 1px solid #dadada;
}
footer > div:first-child {
    padding-left: 2px;
    border-left: none;
}
footer span {
    display: flex;
    align-items: center;
    width: 162px;
    height: 100%;
    background-color: #0f0;
}
.pick {
    gap: 8px;
}
.pick button {
    width: 26px;
    height: 25px;
    border: 1px solid #adadad;
    background-color: #e1e1e1;
}
```
